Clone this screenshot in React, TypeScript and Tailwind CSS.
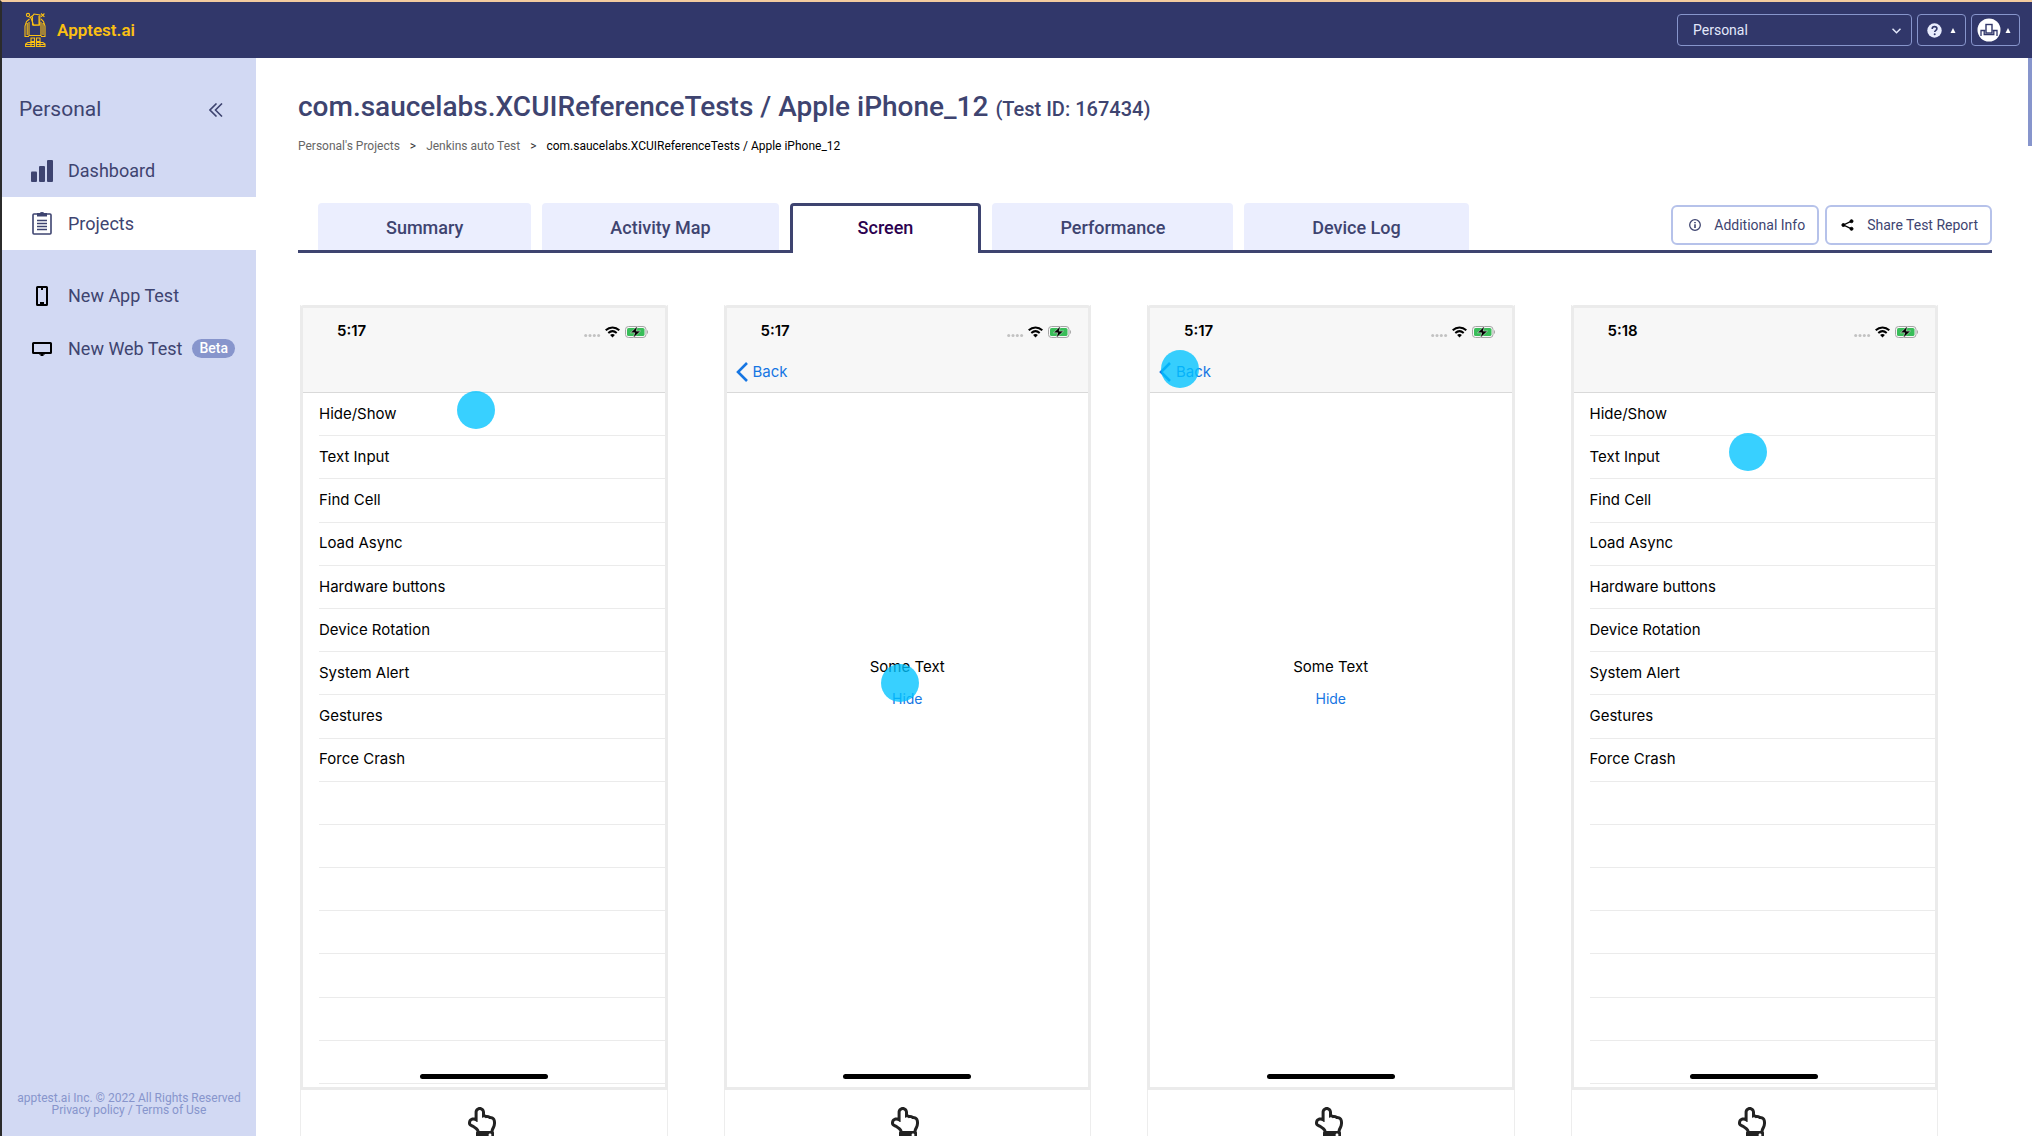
import React from "react";
import { FaRegHandPointUp } from "react-icons/fa";

function RobotLogo() {
  return (
    <svg width="22" height="36" viewBox="0 0 22 36" fill="none" stroke="#fbc012" strokeWidth="1.1" aria-hidden="true">
      <circle cx="4" cy="3" r="1.6" />
      <path d="M17 1.500l3.400 3.400M20.400 1.500l-3.400 3.400" />
      <path d="M6 5.500l3-2 1-1.500 6 1-.4 10-6 .2-2.600-7.200z" />
      <path d="M8.500 4.500v8.500h6.500V4" />
      <path d="M5 10v13.500h12V10" />
      <path d="M5.500 7L2.500 9.500 1 14v10.500h4M3.200 11v12M17 7l2.500 2.500 1.500 4.500v10.500h-4M19 11v12" />
      <path d="M7 26h3.500v3.500H7zM12.500 26H16v3.500h-3.500z" />
      <path d="M7 29.500v5M16 29.500v5" />
      <path d="M1.600 34.500v-2.500l2-1.500h7v4zM21 34.500v-2.500l-2-1.500h-6.500v4z" />
      <path d="M1.600 32.500h8.900M12.500 32.500H21" />
    </svg>
  );
}

function BarsIcon() {
  return (
    <svg width="22" height="22" viewBox="0 0 22 22" fill="#3e4470" aria-hidden="true">
      <rect x="0" y="11.500" width="6" height="10.500" rx="1" />
      <rect x="8" y="6" width="6" height="16" rx="1" />
      <rect x="16" y="0" width="6" height="22" rx="1" />
    </svg>
  );
}

function ClipboardIcon() {
  return (
    <svg width="20" height="23" viewBox="0 0 20 23" fill="none" aria-hidden="true">
      <rect x="1" y="2" width="18" height="20" rx="1" stroke="#3e4470" strokeWidth="1.600" />
      <path d="M5 1h3a2 1 0 0 1 4 0h3v3.500H5z" fill="#3e4470" />
      <path d="M5 8.500h10M5 11.500h10M5 14.500h10M5 17.500h10" stroke="#3e4470" strokeWidth="1.500" />
    </svg>
  );
}

function PhoneIcon() {
  return (
    <svg width="12" height="20" viewBox="0 0 12 20" fill="none" aria-hidden="true">
      <rect x="1" y="1" width="10" height="18" rx="0.500" stroke="#000" strokeWidth="2" />
      <path d="M5 2h2v2H5zM4 16h4v3H4z" fill="#000" />
    </svg>
  );
}

function MonitorIcon() {
  return (
    <svg width="20" height="14" viewBox="0 0 20 14" fill="none" aria-hidden="true">
      <rect x="1" y="1" width="18" height="10" rx="0.500" stroke="#000" strokeWidth="2" />
      <path d="M7 11h6v1.500h-1.500V14h-3v-1.500H7z" fill="#000" />
    </svg>
  );
}

function CollapseIcon() {
  return (
    <svg width="14" height="14" viewBox="0 0 14 14" fill="none" stroke="#3e4470" strokeWidth="1.600" aria-hidden="true">
      <path d="M7.500 0.500L1 7l6.500 6.500M13 0.500L6.500 7l6.500 6.500" />
    </svg>
  );
}

function UpTriangle() {
  return (
    <svg width="6" height="5" viewBox="0 0 6 5" fill="#fff" aria-hidden="true">
      <path d="M3 0l2.500 5h-5z" />
    </svg>
  );
}

function InfoIcon() {
  return (
    <svg width="12" height="12" viewBox="0 0 12 12" fill="none" aria-hidden="true">
      <circle cx="6" cy="6" r="5.300" stroke="#3e4470" strokeWidth="1.300" />
      <path d="M5.200 5.300h1.600v3.700H5.200zM5.200 2.900h1.600v1.400H5.200z" fill="#3e4470" />
    </svg>
  );
}

function ShareIcon() {
  return (
    <svg width="13" height="12" viewBox="0 0 13 12" fill="#000" stroke="#000" aria-hidden="true">
      <path d="M10.500 2.200L2.500 6l8 3.800" fill="none" strokeWidth="1.300" />
      <circle cx="10.500" cy="2.200" r="1.500" />
      <circle cx="2.400" cy="6" r="1.500" />
      <circle cx="10.500" cy="9.800" r="1.500" />
    </svg>
  );
}

function StatusIcons() {
  return (
    <svg width="65" height="12" viewBox="0 0 65 12" fill="none" aria-hidden="true">
      <g fill="#c2c2c2">
        <circle cx="1.700" cy="9.500" r="1.500" />
        <circle cx="6" cy="9.500" r="1.500" />
        <circle cx="10.300" cy="9.500" r="1.500" />
        <circle cx="14.600" cy="9.500" r="1.500" />
      </g>
      <g stroke="#000" strokeWidth="2">
        <path d="M21.700 4.200c4-3.700 9.600-3.700 13.600 0" />
        <path d="M24.300 7c2.500-2.200 5.900-2.200 8.400 0" />
      </g>
      <path d="M26.100 8.900c1.400-1.200 3.400-1.200 4.800 0L28.500 11.400z" fill="#000" />
      <rect x="41.500" y="0.500" width="20.500" height="11" rx="3" stroke="#a5a5a5" />
      <rect x="43" y="2" width="17.500" height="8" rx="1.600" fill="#39bd59" />
      <path d="M63 4v4c1.400-.5 1.400-3.500 0-4z" fill="#a5a5a5" />
      <path d="M53.500 0L46.500 6.800h4.200L49.300 12l7.200-6.900h-4.300z" fill="#000" stroke="#f7f7f7" strokeWidth="0.500" />
    </svg>
  );
}

const menuRows = [
  "Hide/Show",
  "Text Input",
  "Find Cell",
  "Load Async",
  "Hardware buttons",
  "Device Rotation",
  "System Alert",
  "Gestures",
  "Force Crash",
  "",
  "",
  "",
  "",
  "",
  "",
  "",
];

type Shot = { time: string; kind: "menu" | "detail"; x: number; y: number };

const shots: Shot[] = [
  { time: "5:17", kind: "menu", x: 154, y: 83 },
  { time: "5:17", kind: "detail", x: 154, y: 356 },
  { time: "5:17", kind: "detail", x: 11, y: 42 },
  { time: "5:18", kind: "menu", x: 155, y: 125 },
];

function PhoneShot({ shot }: { shot: Shot }) {
  return (
    <article className="border-x border-[#ededed]">
      <div className="relative -mx-px h-[785px] rounded-t border-3 border-[#ebebeb] bg-white font-['Inter',sans-serif] text-black">
        <div className="flex h-full flex-col">
          <div className="h-[85px] border-b border-[#d9d9d9] bg-[#f7f7f7]">
            <div className="flex h-[47px] items-center justify-between pr-4 pl-[34px]">
              <span className="text-[15px] font-semibold">{shot.time}</span>
              <StatusIcons />
            </div>
            {shot.kind === "detail" && (
              <button className="flex h-[34px] items-center gap-[5px] pl-[9px] text-[15px] text-[#1676e3]">
                <svg width="12" height="20" viewBox="0 0 12 20" fill="none" stroke="currentColor" strokeWidth="2.600" aria-hidden="true">
                  <path d="M11 1L2 10l9 9" />
                </svg>
                Back
              </button>
            )}
          </div>
          {shot.kind === "menu" ? (
            <ul className="mb-[3px] ml-4 flex flex-1 flex-col">
              {menuRows.map((row, i) => (
                <li key={i} className="flex flex-1 items-center border-b border-[#ebebeb] text-[15px]">
                  {row}
                </li>
              ))}
            </ul>
          ) : (
            <div className="flex flex-1 flex-col items-center gap-[10px] pt-[262px]">
              <p className="text-[15px] leading-6">Some Text</p>
              <button className="text-sm text-[#1676e3]">Hide</button>
            </div>
          )}
        </div>
        <span className="absolute bottom-2 left-1/2 h-[5px] w-32 -translate-x-1/2 rounded-full bg-black" />
        <span
          className="absolute size-[38px] rounded-full bg-[#00c3ff]/78"
          style={{ left: shot.x, top: shot.y }}
        />
      </div>
      <div className="flex h-16 justify-center pt-[17px] pr-1 text-[#222]">
        <FaRegHandPointUp size={32} />
      </div>
    </article>
  );
}

function NavItem({ icon, label, active, badge }: { icon: React.ReactNode; label: string; active?: boolean; badge?: string }) {
  return (
    <a
      href="#"
      className={`flex h-[53px] items-center pl-7 text-lg text-[#3e4470] ${active ? "bg-white" : ""}`}
    >
      <span className="mr-[15px] flex w-[23px] justify-center">{icon}</span>
      {label}
      {badge && (
        <span className="ml-[10px] rounded-full bg-[#8795cc] px-[7px] text-sm leading-[19px] font-medium text-white">{badge}</span>
      )}
    </a>
  );
}

const tabs = ["Summary", "Activity Map", "Screen", "Performance", "Device Log"];

export default function App() {
  return (
    <div className="flex h-screen flex-col overflow-hidden border-t-2 border-l-2 border-t-[#f3cb9f] border-l-[#2b2b2b] bg-white font-['Roboto',sans-serif]">
      <header className="flex h-14 shrink-0 items-center justify-between bg-[#31376a] pr-3 pl-[22px]">
        <a href="#" className="flex items-center gap-[11px] text-[#fbc012]">
          <RobotLogo />
          <span className="text-[17px] leading-6 font-semibold">Apptest.ai</span>
        </a>
        <div className="flex items-center gap-[5px] text-[#e3e8fb]">
          <div className="relative">
            <select
              aria-label="Workspace"
              className="h-8 w-[235px] appearance-none rounded border border-[#8795cc] bg-transparent pl-[15px] text-sm outline-none"
            >
              <option>Personal</option>
            </select>
            <svg className="pointer-events-none absolute top-[14px] right-[11px]" width="9" height="6" viewBox="0 0 9 6" fill="none" stroke="#e3e8fb" strokeWidth="1.500" aria-hidden="true">
              <path d="M0.500 0.700l4 4 4-4" />
            </svg>
          </div>
          <button aria-label="Help" className="flex h-8 w-[49px] items-center justify-center gap-2 rounded border border-[#8795cc]">
            <svg width="15" height="15" viewBox="0 0 15 15" aria-hidden="true">
              <circle cx="7.500" cy="7.500" r="7.200" fill="#e9edfd" />
              <path d="M5.200 5.900c0-3.100 4.700-2.900 4.700-.2 0 1.600-2.200 1.700-2.200 3.400" fill="none" stroke="#31376a" strokeWidth="1.600" />
              <circle cx="7.700" cy="11.300" r="1" fill="#31376a" />
            </svg>
            <UpTriangle />
          </button>
          <button aria-label="Account" className="flex h-8 w-[49px] items-center gap-1 rounded border border-[#8795cc] pl-[5px]">
            <svg width="24" height="24" viewBox="0 0 24 24" fill="none" aria-hidden="true">
              <circle cx="12" cy="12" r="11.500" fill="#fff" />
              <path d="M4 18v-5.500h4.500M20 18v-5.500h-4.500M7.200 12.500v4h9.600v-4" stroke="#31376a" strokeWidth="1.300" />
              <rect x="9" y="6.500" width="6" height="8.500" fill="#fff" stroke="#31376a" strokeWidth="1.400" />
            </svg>
            <UpTriangle />
          </button>
        </div>
      </header>

      <div className="flex min-h-0 flex-1">
        <aside className="flex w-[254px] shrink-0 flex-col bg-[#d2d9f3]">
          <div className="flex h-[86px] items-center justify-between pt-[18px] pr-[33px] pl-[17px] text-[#3e4470]">
            <h2 className="text-[21px]">Personal</h2>
            <button aria-label="Collapse sidebar">
              <CollapseIcon />
            </button>
          </div>
          <nav className="flex-1">
            <NavItem icon={<BarsIcon />} label="Dashboard" />
            <NavItem icon={<ClipboardIcon />} label="Projects" active />
            <div className="h-[19px]" />
            <NavItem icon={<PhoneIcon />} label="New App Test" />
            <NavItem icon={<MonitorIcon />} label="New Web Test" badge="Beta" />
          </nav>
          <footer className="pb-5 text-center text-xs leading-3 text-[#8795cc]">
            <p>apptest.ai Inc. © 2022 All Rights Reserved</p>
            <p>
              <a href="#">Privacy policy</a> / <a href="#">Terms of Use</a>
            </p>
          </footer>
        </aside>

        <main className="relative min-w-0 flex-1 overflow-hidden pr-10 pl-[42px]">
          <h1 className="pt-[33px] text-[28px] leading-8 font-medium text-[#3e4470]">
            com.saucelabs.XCUIReferenceTests / Apple iPhone_12 <span className="text-xl">(Test ID: 167434)</span>
          </h1>
          <nav aria-label="Breadcrumb" className="mt-[15px] flex gap-[10px] text-xs leading-4 text-[#666]">
            <a href="#">Personal's Projects</a>
            <span className="text-[#333]">&gt;</span>
            <a href="#">Jenkins auto Test</a>
            <span className="text-[#333]">&gt;</span>
            <span className="text-black">com.saucelabs.XCUIReferenceTests / Apple iPhone_12</span>
          </nav>

          <div className="mt-[49px] flex h-[50px] items-stretch border-b-3 border-[#3e4470] pl-5">
            <div role="tablist" className="flex gap-[11px]">
              {tabs.map((tab) =>
                tab === "Screen" ? (
                  <button
                    key={tab}
                    role="tab"
                    aria-selected="true"
                    className="-mb-[3px] rounded-t border-x-3 border-t-3 border-[#3e4470] bg-white px-[65px] pb-1 text-lg font-medium text-[#2c0150]"
                  >
                    {tab}
                  </button>
                ) : (
                  <button
                    key={tab}
                    role="tab"
                    aria-selected="false"
                    className="rounded-t bg-[#ebeefe] px-[68px] pt-[2px] text-lg font-medium text-[#3e4470]"
                  >
                    {tab}
                  </button>
                ),
              )}
            </div>
            <div className="ml-auto flex items-start gap-[6px] pt-[2px] text-sm text-[#3e4470]">
              <button className="flex h-10 items-center gap-[13px] rounded-md border-2 border-[#b6c2ea] pr-3 pl-4">
                <InfoIcon />
                Additional Info
              </button>
              <button className="flex h-10 items-center gap-[13px] rounded-md border-2 border-[#b6c2ea] pr-3 pl-[14px]">
                <ShareIcon />
                Share Test Report
              </button>
            </div>
          </div>

          <section className="mt-[52px] grid grid-cols-4 gap-14 pr-[54px] pl-[2px]">
            {shots.map((shot, i) => (
              <PhoneShot key={i} shot={shot} />
            ))}
          </section>

          <span className="absolute top-0 right-0 h-[88px] w-1 bg-[#8795cc]" />
        </main>
      </div>
    </div>
  );
}
